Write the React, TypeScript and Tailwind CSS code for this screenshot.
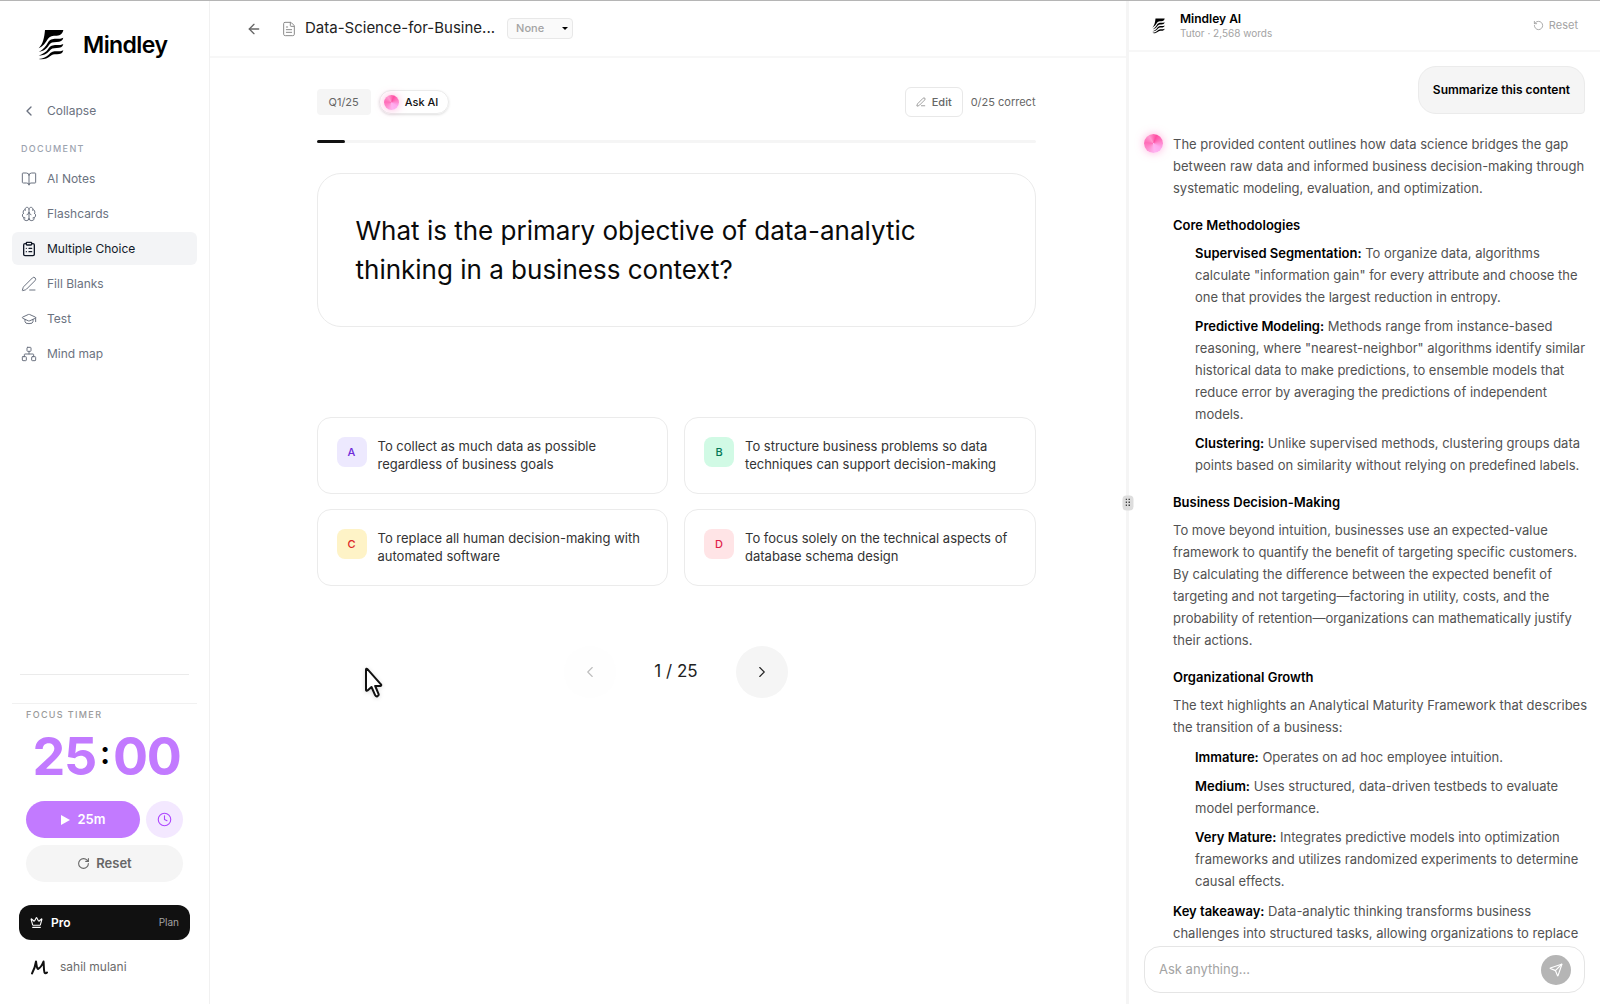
import React from "react";
import {
    ArrowLeft,
    BookOpen,
    Brain,
    ChevronLeft,
    ChevronRight,
    ClipboardList,
    Clock,
    Crown,
    FileText,
    GraduationCap,
    Network,
    PenLine,
    RotateCcw,
    RotateCw,
    Send,
} from "lucide-react";
import { clsx } from "clsx";

const navItems = [
    { label: "AI Notes", icon: BookOpen },
    { label: "Flashcards", icon: Brain },
    { label: "Multiple Choice", icon: ClipboardList, active: true },
    { label: "Fill Blanks", icon: PenLine },
    { label: "Test", icon: GraduationCap },
    { label: "Mind map", icon: Network },
];

const options = [
    {
        letter: "A",
        text: "To collect as much data as possible regardless of business goals",
        badge: "bg-[#ede9fe] text-[#6d28d9]",
    },
    {
        letter: "B",
        text: "To structure business problems so data techniques can support decision-making",
        badge: "bg-[#d1fae5] text-[#047857]",
    },
    {
        letter: "C",
        text: "To replace all human decision-making with automated software",
        badge: "bg-[#fef3c7] text-[#dc2626]",
    },
    {
        letter: "D",
        text: "To focus solely on the technical aspects of database schema design",
        badge: "bg-[#ffe4e6] text-[#e11d48]",
    },
];

const Logo = ({ className }: { className?: string }) => (
    <svg viewBox="12 14 78 96" fill="currentColor" aria-hidden="true" className={className}>
        <path d="M33 17H88C86 27 80 34 68 34C56 34 47 35 42 43C35 55 28 65 14 72C27 59 31 40 33 17Z" />
        <path d="M88 40C86 49 79 53 68 53C56 53 50 55 45 62C37 74 29 80 14 83C29 75 35 66 41 56C47 45 55 43 66 43C76 43 83 43 88 40Z" />
        <path d="M88 59C86 68 79 71 68 71C57 71 52 73 46 80C38 89 28 94 14 94C28 89 36 83 42 75C49 64 56 62 67 62C77 62 83 62 88 59Z" />
        <path d="M88 78C86 87 79 90 69 90C59 90 54 91 48 96C39 103 28 107 14 104C28 102 37 98 44 91C52 82 59 81 68 81C77 81 83 81 88 78Z" />
    </svg>
);

const Orb = ({ className }: { className?: string }) => (
    <span
        aria-hidden="true"
        className={clsx(
            "block shrink-0 rounded-full bg-[conic-gradient(from_20deg,#ff4fa3,#ff7cc4,#ffa8ee,#ffb3f0,#ff8fd0,#ff6db8,#ff9ad0,#ff4fa3)] shadow-[0_0_8px_rgba(255,105,190,0.5)]",
            className
        )}
    />
);

const Term = ({ children }: { children: React.ReactNode }) => (
    <strong className="font-semibold text-black">{children}</strong>
);

const Sidebar = () => (
    <aside className="flex w-[210px] shrink-0 flex-col border-r border-[#f1f1f1]">
        <div className="flex items-center gap-[19px] px-[38px] pt-7">
            <Logo className="h-8 w-[26px]" />
            <span className="text-[23px] leading-8 font-semibold tracking-tight text-black">Mindley</span>
        </div>

        <nav className="mt-[33px] flex flex-col gap-[2px] px-3 text-xs text-[#6b7280]">
            <button className="flex h-[33px] items-center gap-[10px] px-[9px]">
                <ChevronLeft size={16} />
                Collapse
            </button>
            <h2 className="mt-3 mb-[3px] px-[9px] text-[9px] leading-4 font-medium tracking-[0.15em] text-[#9ca3af]">DOCUMENT</h2>
            {navItems.map(({ label, icon: Icon, active }) => (
                <a
                    key={label}
                    href="#"
                    className={clsx(
                        "flex h-[33px] items-center gap-[10px] rounded-md px-[9px]",
                        active && "bg-[#f3f4f6] text-[#111827]"
                    )}
                >
                    <Icon size={16} strokeWidth={active ? 2 : 1.5} />
                    {label}
                </a>
            ))}
        </nav>

        <div className="mx-5 mt-auto border-t border-[#ebebeb]" />

        <section className="mx-3 mt-7 border-t border-[#f1f1f1] px-[14px] pt-[3px]">
            <h2 className="text-[9px] leading-4 font-medium tracking-[0.15em] text-[#9a9a9a]">FOCUS TIMER</h2>
            <div className="mt-2 flex h-[52px] items-center justify-center pl-1 text-[52px] leading-none font-bold tracking-tight text-[#c27aff]">
                <span>25</span>
                <span className="px-1 pb-2 text-[32px] font-semibold text-black">:</span>
                <span>00</span>
            </div>
            <div className="mt-[18px] flex gap-[6px] text-[13px] font-semibold">
                <button className="flex h-[37px] flex-1 items-center justify-center gap-2 rounded-full bg-[#c27aff] text-white">
                    <svg width="9" height="10" viewBox="0 0 9 10" fill="currentColor" aria-hidden="true">
                        <path d="M0 0l9 5-9 5z" />
                    </svg>
                    25m
                </button>
                <button aria-label="Timer length" className="flex size-[37px] items-center justify-center rounded-full bg-[#f3e8ff] text-[#ad46ff]">
                    <Clock size={15} strokeWidth={1.75} />
                </button>
            </div>
            <button className="mt-[7px] flex h-[37px] w-full items-center justify-center gap-[6px] rounded-full bg-[#f5f5f5] text-[13px] font-semibold text-[#666666]">
                <RotateCw size={13} />
                Reset
            </button>
        </section>

        <button className="mx-[19px] mt-[23px] flex h-[35px] items-center gap-2 rounded-xl bg-[#111111] px-[11px] text-white">
            <Crown size={13} />
            <span className="text-xs font-semibold">Pro</span>
            <span className="ml-auto text-[10px] text-[#a3a3a3]">Plan</span>
        </button>
        <div className="mt-4 mb-[26px] flex h-[22px] items-center gap-3 px-[31px] text-xs text-[#6b6b6b]">
            <svg width="17" height="15" viewBox="0 0 17 15" fill="none" stroke="#111" strokeWidth="2" strokeLinecap="round" strokeLinejoin="round" aria-hidden="true">
                <path d="M1 13.500C3 10 4.500 5 5 1.500C5.500 4 5.500 8 7 9C9.500 8 11.500 4 12.500 1.500C13 5 12.500 9 13.500 12.500C14 13.500 15 13.500 16 12.500" />
            </svg>
            sahil mulani
        </div>
    </aside>
);

const Quiz = () => (
    <main className="flex min-w-0 flex-1 flex-col">
        <header className="flex h-[57px] shrink-0 items-center border-b-2 border-[#f7f7f7] pl-9">
            <button aria-label="Back" className="text-[#666666]">
                <ArrowLeft size={16} />
            </button>
            <FileText size={16} strokeWidth={1.5} className="ml-[19px] text-[#8a8a8a]" />
            <h1 className="ml-2 text-[15px] whitespace-nowrap text-[#222222]">Data-Science-for-Busine...</h1>
            <div className="relative ml-3 flex items-center">
                <select
                    aria-label="Folder"
                    className="h-[21px] w-[66px] appearance-none rounded border border-[#e8e8e8] bg-[#fafafa] pl-2 text-[11px] font-medium text-[#a3a3a3]"
                >
                    <option>None</option>
                </select>
                <span className="pointer-events-none absolute right-[5px] border-x-[3px] border-t-[3px] border-x-transparent border-t-black" />
            </div>
        </header>

        <div className="pl-4">
            <div className="mx-auto mt-[29px] flex max-w-[719px] flex-col">
                <div className="flex h-[30px] items-center">
                    <span className="flex h-[26px] items-center rounded bg-[#f5f5f5] px-3 text-[11px] text-[#666666]">Q1/25</span>
                    <button className="ml-2 flex h-6 items-center gap-[6px] rounded-full border border-[#ebebeb] px-[10px] pl-1 text-[11px] font-medium text-[#111111] shadow-sm">
                        <Orb className="size-[15px]" />
                        Ask AI
                    </button>
                    <button className="ml-auto flex h-[30px] items-center gap-[6px] rounded-md border border-[#e8e8e8] px-[10px] text-[11px] font-medium text-[#666666]">
                        <PenLine size={10} strokeWidth={1.5} />
                        Edit
                    </button>
                    <span className="ml-2 text-[11px] text-[#666666]">0/25 correct</span>
                </div>

                <div className="mt-[23px] h-[3px] rounded-full bg-[#f5f5f5]">
                    <div className="h-full rounded-full bg-[#111111]" style={{ width: `${(1 / 25) * 100}%` }} />
                </div>

                <section className="mt-[30px] rounded-3xl border border-[#ebebeb] px-[38px] py-[37px]">
                    <h2 className="max-w-[600px] text-[26px] leading-[39px] text-[#0a0a0a]">
                        What is the primary objective of data-analytic thinking in a business context?
                    </h2>
                </section>

                <div className="mt-[90px] grid grid-cols-2 gap-x-4 gap-y-[15px]">
                    {options.map((option) => (
                        <button
                            key={option.letter}
                            className="flex h-[77px] items-start gap-[11px] rounded-[14px] border border-[#ebebeb] px-[19px] pt-[19px] text-left"
                        >
                            <span className={clsx("flex size-[30px] shrink-0 items-center justify-center rounded-lg text-[11px] font-medium", option.badge)}>
                                {option.letter}
                            </span>
                            <span className="text-[13px] leading-[18px] text-[#333333]">{option.text}</span>
                        </button>
                    ))}
                </div>

                <div className="mt-[60px] flex items-center justify-center gap-[38px]">
                    <button aria-label="Previous question" disabled className="flex size-[52px] items-center justify-center rounded-full bg-[#fefefe] text-[#bdbdbd]">
                        <ChevronLeft size={18} strokeWidth={1.5} />
                    </button>
                    <span className="text-[17px] text-[#222222]">1 / 25</span>
                    <button aria-label="Next question" className="flex size-[52px] items-center justify-center rounded-full bg-[#f5f5f5] text-[#222222]">
                        <ChevronRight size={18} strokeWidth={1.5} />
                    </button>
                </div>
            </div>
        </div>
    </main>
);

const Divider = () => (
    <div className="relative w-[3px] shrink-0 bg-[#f5f5f5]">
        <button aria-label="Resize panel" className="absolute top-1/2 left-1/2 flex h-[15px] w-[11px] -translate-1/2 items-center justify-center rounded-sm bg-[#dddddd]">
            <svg width="5" height="8" viewBox="0 0 5 8" fill="#444" aria-hidden="true">
                <path d="M0 0h1.500v1.500H0zM3 0h1.500v1.500H3zM0 3h1.500v1.500H0zM3 3h1.500v1.500H3zM0 6h1.500v1.500H0zM3 6h1.500v1.500H3z" />
            </svg>
        </button>
    </div>
);

const Heading = ({ children }: { children: React.ReactNode }) => (
    <h3 className="mt-[15px] mb-[6px] font-semibold text-black">{children}</h3>
);

const Chat = () => (
    <aside className="flex w-[471px] shrink-0 flex-col">
        <header className="flex h-[51px] shrink-0 items-center border-b-2 border-[#f7f7f7] pr-[22px] pl-[23px]">
            <Logo className="h-4 w-[13px] text-black" />
            <div className="ml-[15px]">
                <h2 className="text-xs leading-[14px] font-semibold text-black">Mindley AI</h2>
                <p className="text-[10px] leading-[14px] text-[#a3a3a3]">Tutor · 2,568 words</p>
            </div>
            <button className="ml-auto flex items-center gap-[5px] text-[11px] text-[#a3a3a3]">
                <RotateCcw size={11} />
                Reset
            </button>
        </header>

        <div className="min-h-0 flex-1 overflow-hidden px-[15px]">
            <div className="mt-[14px] ml-auto flex h-12 w-fit items-center rounded-[18px] rounded-br-sm border border-[#ebebeb] bg-[#f5f5f5] px-[14px] text-xs font-semibold text-black">
                Summarize this content
            </div>

            <div className="mt-[19px] flex gap-[10px]">
                <Orb className="mt-[1px] size-[19px]" />
                <div className="-mr-2 text-[13px] leading-[22px] text-[#525252]">
                    <p>
                        The provided content outlines how data science bridges the gap between raw data and informed business decision-making through
                        systematic modeling, evaluation, and optimization.
                    </p>
                    <Heading>Core Methodologies</Heading>
                    <ul className="flex flex-col gap-[7px] pl-[22px]">
                        <li>
                            <Term>Supervised Segmentation:</Term> To organize data, algorithms calculate "information gain" for every attribute and
                            choose the one that provides the largest reduction in entropy.
                        </li>
                        <li>
                            <Term>Predictive Modeling:</Term> Methods range from instance-based reasoning, where "nearest-neighbor" algorithms
                            identify similar historical data to make predictions, to ensemble models that reduce error by averaging the
                            predictions of independent models.
                        </li>
                        <li>
                            <Term>Clustering:</Term> Unlike supervised methods, clustering groups data points based on similarity without relying on
                            predefined labels.
                        </li>
                    </ul>
                    <Heading>Business Decision-Making</Heading>
                    <p>
                        To move beyond intuition, businesses use an expected-value framework to quantify the benefit of targeting specific customers.
                        By calculating the difference between the expected benefit of targeting and not targeting—factoring in utility, costs, and
                        the probability of retention—organizations can mathematically justify their actions.
                    </p>
                    <Heading>Organizational Growth</Heading>
                    <p>The text highlights an Analytical Maturity Framework that describes the transition of a business:</p>
                    <ul className="mt-2 flex flex-col gap-[7px] pl-[22px]">
                        <li>
                            <Term>Immature:</Term> Operates on ad hoc employee intuition.
                        </li>
                        <li>
                            <Term>Medium:</Term> Uses structured, data-driven testbeds to evaluate model performance.
                        </li>
                        <li>
                            <Term>Very Mature:</Term> Integrates predictive models into optimization frameworks and utilizes randomized experiments
                            to determine causal effects.
                        </li>
                    </ul>
                    <p className="mt-2">
                        <Term>Key takeaway:</Term> Data-analytic thinking transforms business challenges into structured tasks, allowing organizations
                        to replace
                    </p>
                </div>
            </div>
        </div>

        <form className="mx-[15px] mb-[11px] flex h-[47px] shrink-0 items-center rounded-2xl border border-[#e5e5e5] bg-white pr-[13px] pl-[14px]">
            <input
                type="text"
                aria-label="Ask anything"
                placeholder="Ask anything..."
                className="min-w-0 flex-1 text-[13px] outline-none placeholder:text-[#a3a3a3]"
            />
            <button type="button" aria-label="Send" className="flex size-[30px] items-center justify-center rounded-full bg-[#b5b5b5] text-white">
                <Send size={14} />
            </button>
        </form>
    </aside>
);

const Cursor = () => (
    <svg aria-hidden="true" width="20" height="32" viewBox="0 0 20 32" className="pointer-events-none absolute top-[666px] left-[364px] drop-shadow-sm">
        <path
            d="M2 2.500V23c0 .8.900 1.100 1.500.6L7.500 20l3.600 8.200c.5 1.100 1.300 1.400 2.400 1 1.100-.5 1.400-1.300 1-2.300L11.200 19h5c1 0 1.400-1 .7-1.700L3.200 1.900C2.700 1.400 2 1.700 2 2.500z"
            fill="#fff"
            stroke="#111"
            strokeWidth="2"
            strokeLinejoin="round"
        />
    </svg>
);

export default function App() {
    return (
        <div className="relative flex h-screen border-t border-[#b5b5b5] bg-white font-['Inter',sans-serif]">
            <Sidebar />
            <Quiz />
            <Divider />
            <Chat />
            <Cursor />
        </div>
    );
}
